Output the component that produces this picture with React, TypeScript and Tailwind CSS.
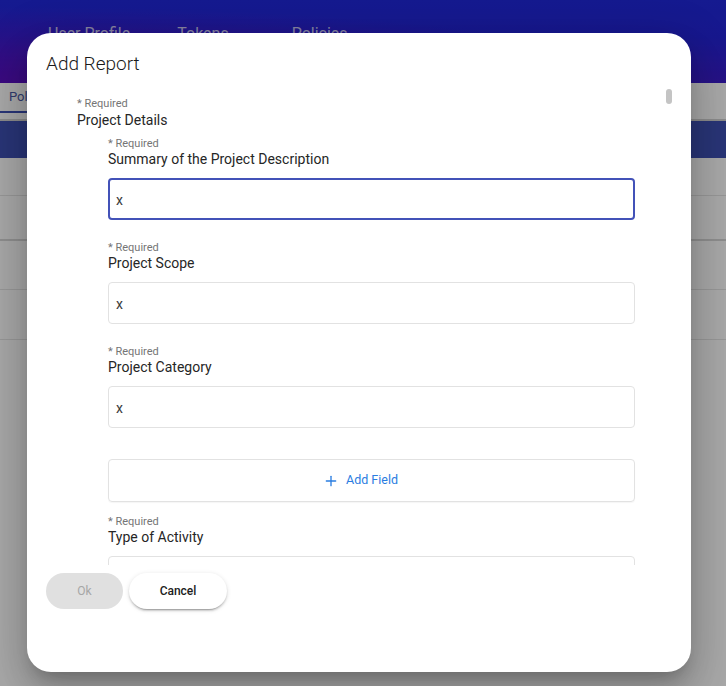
import { Plus } from 'lucide-react';

const fields = ['Summary of the Project Description', 'Project Scope', 'Project Category'];

const Field = ({ label, focused = false }: { label: string; focused?: boolean }) => (
  <div>
    <div className="text-[11px] leading-[13px] text-[#757575]">* Required</div>
    <div className="text-[14px] leading-[19px] text-[#262626]">{label}</div>
    <div
      className={`mt-[9px] flex h-[42px] items-center rounded-[4px] pt-[3px] text-[14px] text-[#3a3a3a] ${
        focused ? 'border-2 border-[#4352b8] px-[6px]' : 'border border-[#e2e2e2] px-[7px]'
      }`}
    >
      x
    </div>
  </div>
);

export default function App() {
  return (
    <div className="relative h-[686px] w-[726px] overflow-hidden bg-white font-['Roboto','Liberation_Sans',sans-serif]">
      {/* page behind the dialog */}
      <header className="h-[83px] bg-[radial-gradient(ellipse_at_0%_100%,#5a10c2_0%,rgba(90,16,194,0)_65%),linear-gradient(to_bottom,#2028db_0%,#2424d8_45%,#3c1ccc_100%)]">
        <nav className="flex pl-[48px] pt-[22px] text-[16px] leading-[24px] text-white/75">
          <span>User Profile</span>
          <span className="ml-[47px]">Tokens</span>
          <span className="ml-[63px]">Policies</span>
        </nav>
      </header>
      <div className="h-[38px] border-b-2 border-[#d4d4d4] bg-white">
        <div className="inline-flex h-[30px] flex-col justify-center border-b-2 border-[#3f51b5] pl-[9px] pr-[12px] text-[13px] text-[#4a5aa8]">
          Policies
        </div>
      </div>
      <div className="h-[37px] bg-[#3f51b5]" />
      <div className="h-[38px] border-b border-[#e6e6e6]" />
      <div className="h-[45px] border-b-2 border-[#d8d8d8]" />
      <div className="h-[49px] border-b border-[#e6e6e6]" />
      <div className="h-[50px] border-b border-[#e6e6e6]" />

      {/* modal backdrop */}
      <div className="absolute inset-0 bg-black/[0.34]" />

      <div className="absolute left-[27px] top-[33px] flex h-[639px] w-[664px] flex-col rounded-[24px] bg-white pl-[19px] pt-[19px] shadow-[0_11px_15px_-7px_rgba(0,0,0,0.2),0_24px_38px_3px_rgba(0,0,0,0.14),0_9px_46px_8px_rgba(0,0,0,0.12)]">
        <h2 className="text-[19px] font-light leading-[24px] text-[#1a1a1a]">Add Report</h2>

        <div className="relative mt-[11px] h-[478px] w-[628px] overflow-hidden pl-[31px] pt-[10px]">
          <div className="text-[11px] leading-[13px] text-[#757575]">* Required</div>
          <div className="mt-[1px] text-[14px] leading-[18px] text-[#262626]">Project Details</div>

          <div className="ml-[31px] mt-[8px] w-[527px]">
            <div className="flex flex-col gap-[21px]">
              {fields.map((f, i) => (
                <Field key={f} label={f} focused={i === 0} />
              ))}
            </div>

            <button className="mt-[31px] flex h-[43px] w-full items-center justify-center gap-[7px] rounded-[4px] border border-[#e2e2e2] pr-[22px] text-[12.5px] text-[#2a7de1] shadow-[0_1px_1px_rgba(0,0,0,0.04)]">
              <Plus size={16} strokeWidth={2} />
              Add Field
            </button>

            <div className="mt-[13px]">
              <Field label="Type of Activity" />
            </div>
          </div>

          {/* scrollbar thumb */}
          <div className="absolute right-[2px] top-[2px] h-[15px] w-[6px] rounded-full bg-[#c4c4c4]" />
        </div>

        <div className="mt-[8px] flex gap-[6px]">
          <button className="h-[36px] w-[77px] rounded-full bg-[#e0e0e0] text-[12px] text-[#a6a6a6]">Ok</button>
          <button className="h-[36px] w-[98px] rounded-full bg-white text-[12px] font-medium text-[#212121] shadow-[0_3px_1px_-2px_rgba(0,0,0,0.2),0_2px_2px_0_rgba(0,0,0,0.14),0_1px_5px_0_rgba(0,0,0,0.12)]">
            Cancel
          </button>
        </div>
      </div>
    </div>
  );
}
